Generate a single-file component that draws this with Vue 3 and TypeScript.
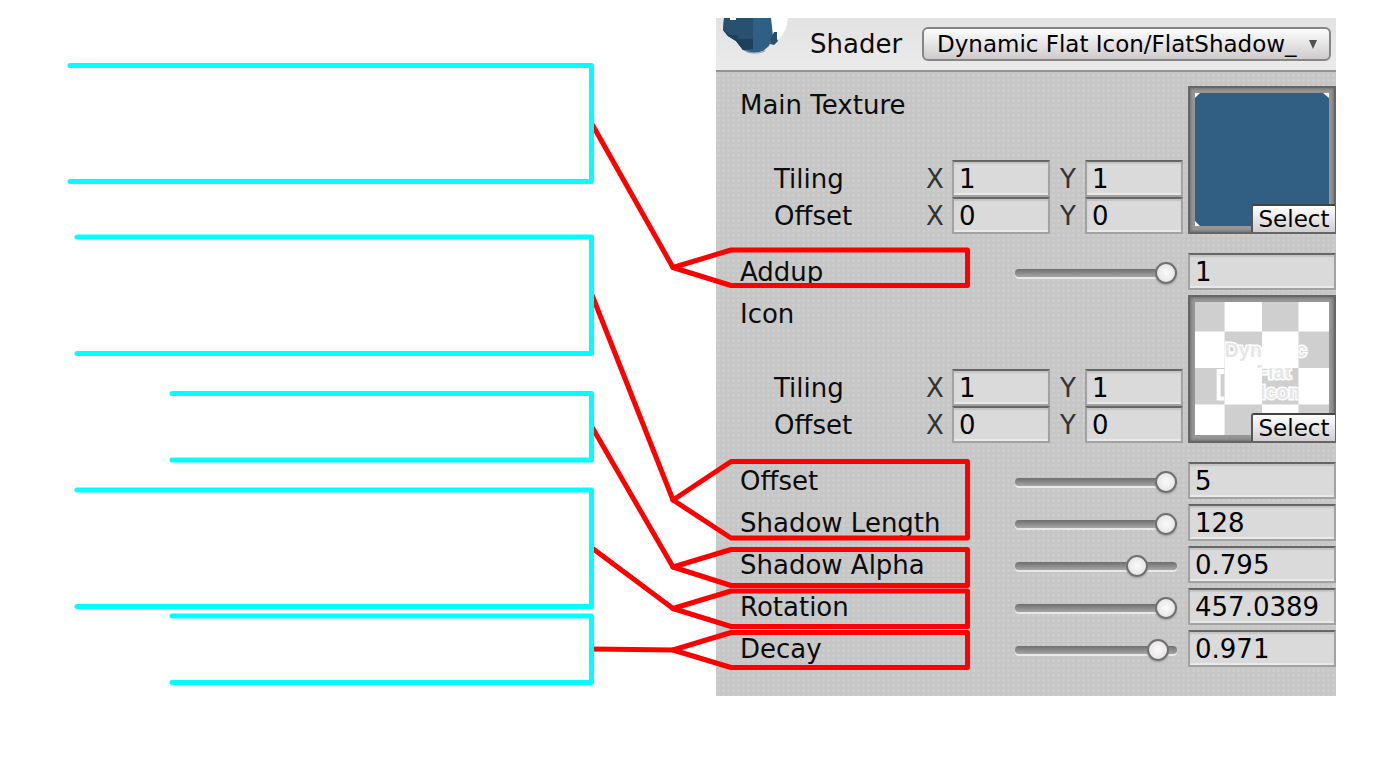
<script setup lang="ts">
import { reactive, ref } from 'vue'

interface Axis { x: string; y: string }
interface TextureProp { kind: 'texture'; id: string; label: string; tiling: Axis; offset: Axis; preview: 'solid' | 'checker' }
interface RangeProp { kind: 'range'; id: string; label: string; min: number; max: number; step: number; value: number }
type Prop = TextureProp | RangeProp

const shader = ref('Dynamic Flat Icon/FlatShadow_')

const range = (id: string, label: string, min: number, max: number, value: number): RangeProp =>
  ({ kind: 'range', id, label, min, max, value, step: 0.0001 })

const texture = (id: string, label: string, preview: 'solid' | 'checker'): TextureProp =>
  ({ kind: 'texture', id, label, preview, tiling: { x: '1', y: '1' }, offset: { x: '0', y: '0' } })

const props = reactive<Prop[]>([
  texture('main', 'Main Texture', 'solid'),
  range('addup', 'Addup', 0, 1, 1),
  texture('icon', 'Icon', 'checker'),
  range('offset', 'Offset', 0, 5, 5),
  range('length', 'Shadow Length', 0, 128, 128),
  range('alpha', 'Shadow Alpha', 0, 1, 0.795),
  range('rotation', 'Rotation', 0, 457.0389, 457.0389),
  range('decay', 'Decay', 0.5, 1, 0.971),
])

const cells = 'M0 0H30V30H0ZM68 0H105V30H68ZM30 30H68V67H30ZM105 30H136V67H105ZM0 67H30V104H0ZM68 67H105V104H68ZM30 104H68V135H30ZM105 104H136V135H105Z'

const brackets = [
  'M70 65.500H591.500V181.500H70',
  'M77 237H591.500V353.500H77',
  'M172 393.500H591.500V460H172',
  'M77 490H591.500V606.500H77',
  'M172 616H591.500V682.500H172',
]

const leaders = [
  'M592 124L673 267.500',
  'M592 295L673 500',
  'M592 427L673 567',
  'M592 548L673 608.500',
  'M592 649L673 650',
]

const tags = [
  'M673 267.500L731 250H967.500V285.500H731Z',
  'M673 500L731 461.500H967.500V538H731Z',
  'M673 567L731 549.500H967.500V585.500H731Z',
  'M673 608.500L731 591H967.500V626.500H731Z',
  'M673 650L731 632.500H967.500V667.500H731Z',
]
</script>

<template>
  <main class="page">
    <section class="inspector">
      <header class="head">
        <svg class="ball" width="72" height="52" viewBox="0 0 72 52" aria-hidden="true">
          <path d="M50 0H72Q71 13 63 21L50 26Z" fill="#fff" />
          <path d="M8 0H55L57 18L53 28L47 33Q36 37 27 32L20 23L12 18L7 12Z" fill="#2f6084" />
          <path d="M8 0H37V31L27 32L20 23L12 18L7 12Z" fill="#28506f" />
          <path d="M7 12L14 17H22V21H37V31L27 32L20 23L12 18Z" fill="#1f405b" />
          <path d="M29 32Q40 37 50 32L48 34Q38 37 30 34Z" fill="#7e9db5" />
          <path d="M55 20L58 14H61V21L62 23L58 27L54 26Z" fill="#2a4f6c" />
          <path d="M14 0H20V2H14Z" fill="#fff" />
        </svg>
        <label class="shader-label" for="shader">Shader</label>
        <span class="dropdown">
          <select id="shader" v-model="shader">
            <option>Dynamic Flat Icon/FlatShadow_</option>
          </select>
          <svg class="arrow" width="8" height="9" viewBox="0 0 8 9" aria-hidden="true">
            <path d="M0 0H8L4 9Z" fill="#505050" />
          </svg>
        </span>
      </header>

      <div class="props">
        <template v-for="p in props" :key="p.id">
          <div v-if="p.kind === 'texture'" class="texture">
            <div class="fields">
              <span class="title">{{ p.label }}</span>
              <div class="vector">
                <span class="name">Tiling</span>
                <label class="axis" :for="p.id + '-tx'">X</label>
                <input :id="p.id + '-tx'" v-model="p.tiling.x" class="field" type="text" />
                <label class="axis y" :for="p.id + '-ty'">Y</label>
                <input :id="p.id + '-ty'" v-model="p.tiling.y" class="field" type="text" />
              </div>
              <div class="vector">
                <span class="name">Offset</span>
                <label class="axis" :for="p.id + '-ox'">X</label>
                <input :id="p.id + '-ox'" v-model="p.offset.x" class="field" type="text" />
                <label class="axis y" :for="p.id + '-oy'">Y</label>
                <input :id="p.id + '-oy'" v-model="p.offset.y" class="field" type="text" />
              </div>
            </div>
            <div class="preview">
              <svg v-if="p.preview === 'solid'" viewBox="0 0 136 135" aria-hidden="true">
                <rect width="136" height="135" fill="#fff" />
                <path d="M5 0H130L136 5V135H5L0 130V5Z" fill="#315f84" />
              </svg>
              <svg v-else viewBox="0 0 136 135" aria-hidden="true">
                <clipPath id="cells"><path :d="cells" /></clipPath>
                <rect width="136" height="135" fill="#fff" />
                <path :d="cells" fill="#cfcfcf" />
                <g clip-path="url(#cells)">
                  <path d="M22 68H30V100H22ZM30 50H68V67H30Z" fill="#fff" />
                  <path d="M26 73H30V96H26Z" fill="#cfcfcf" />
                  <g class="logo">
                    <text x="30" y="56">Dynamic</text>
                    <text x="62" y="78">Flat</text>
                    <text x="66" y="98">Icon</text>
                  </g>
                </g>
              </svg>
              <button class="select" type="button">Select</button>
            </div>
          </div>

          <div v-else class="range">
            <label class="title" :for="p.id">{{ p.label }}</label>
            <input :id="p.id" v-model.number="p.value" class="slider" type="range" :min="p.min" :max="p.max" :step="p.step" />
            <input v-model="p.value" class="field" type="text" :aria-label="p.label + ' value'" />
          </div>
        </template>
      </div>
    </section>

    <svg class="callouts" width="1000" height="769" viewBox="0 0 1000 769" aria-hidden="true">
      <g class="red">
        <path v-for="d in leaders" :key="d" :d="d" />
        <path v-for="d in tags" :key="d" :d="d" />
      </g>
      <g class="cyan">
        <path v-for="d in brackets" :key="d" :d="d" />
      </g>
    </svg>
  </main>
</template>

<style>
body {
  background: #fff;
}
</style>

<style scoped>
.page {
  position: relative;
  box-sizing: border-box;
  min-height: 100vh;
  padding: 18px 58px 73px 716px;
  font: 26px/37px "DejaVu Sans", Verdana, sans-serif;
  color: #0c0c0c;
}

.page * {
  box-sizing: border-box;
}

.callouts {
  position: absolute;
  top: 0;
  left: 0;
  pointer-events: none;
}

.callouts path {
  fill: none;
  stroke-width: 5;
  stroke-linecap: round;
  stroke-linejoin: round;
}

.red path {
  stroke: #f00;
}

.cyan path {
  stroke: #0ff;
}

.inspector {
  background-color: #c6c6c6;
  background-image: radial-gradient(circle, #cdcdcd 1px, transparent 2px);
  background-size: 5px 5px;
}

.head {
  display: flex;
  align-items: center;
  height: 54px;
  padding-right: 5px;
  border-bottom: 2px solid #929292;
  background: linear-gradient(#e2e2e2, #ebebeb);
}

.ball {
  flex: none;
}

.shader-label {
  flex: none;
  width: 134px;
  padding: 1px 0 0 22px;
}

.dropdown {
  position: relative;
  flex: 1;
  min-width: 0;
}

.dropdown select {
  display: block;
  width: 100%;
  height: 34px;
  padding: 0 20px 0 13px;
  appearance: none;
  border: 2px solid #858585;
  border-radius: 6px;
  background: linear-gradient(#fdfdfd, #cfcbcd);
  color: #000;
  font: 23px/30px "DejaVu Sans", Verdana, sans-serif;
}

.arrow {
  position: absolute;
  top: 13px;
  right: 14px;
}

.props {
  display: flex;
  flex-direction: column;
  gap: 5px;
  padding: 14px 0 29px 24px;
}

.texture,
.range {
  display: flex;
  align-items: center;
}

.texture {
  margin-bottom: 14px;
}

.range {
  height: 37px;
}

.fields {
  display: flex;
  flex: 1;
  flex-direction: column;
  height: 148px;
  min-width: 0;
}

.fields > .title {
  margin-bottom: auto;
}

.title,
.name,
.axis {
  padding-top: 1px;
}

.vector {
  display: flex;
  height: 37px;
  padding: 0 5px 0 34px;
}

.name {
  flex: 1;
}

.axis {
  width: 26px;
  color: #333;
}

.axis.y {
  width: 35px;
  padding-left: 10px;
}

.field {
  width: 98px;
  height: 37px;
  padding: 2px 5px 0;
  border: 2px solid #a2a2a2;
  border-top: 2px solid #666;
  border-radius: 0;
  outline: 0;
  background-color: #dadada;
  box-shadow: inset 0 2px 1px #c4c4c4, inset 0 -2px #e9e9e9;
  color: #000;
  font: inherit;
}

.preview {
  position: relative;
  flex: none;
  width: 148px;
  height: 148px;
  padding: 5px;
  border: 2px solid #666;
  background: #969696;
  box-shadow: inset 0 0 3px 1px #707070;
}

.preview svg {
  display: block;
  width: 100%;
}

.logo {
  fill: #e6e6e6;
  stroke: #fff;
  stroke-width: 3px;
  paint-order: stroke;
  font: bold 20px "Liberation Sans", Arial, sans-serif;
}

.select {
  position: absolute;
  right: -1px;
  bottom: 0;
  width: 84px;
  height: 28px;
  padding: 0;
  border: 0;
  border-top: 2px solid #444;
  border-left: 2px solid #555;
  border-top-left-radius: 3px;
  background: linear-gradient(#fff, #d0cecf);
  color: #000;
  font: 23px/26px "DejaVu Sans", Verdana, sans-serif;
}

.range .title {
  flex: 1;
  min-width: 0;
}

.range .field {
  width: 148px;
}

.slider {
  width: 162px;
  height: 24px;
  margin: 2px 11px 0 0;
  appearance: none;
  background: none;
}

.slider::-webkit-slider-runnable-track {
  height: 8px;
  border-radius: 4px;
  background: linear-gradient(#6e6e6e, #a6a6a6);
  box-shadow: 0 2px #e8e8e8;
}

.slider::-webkit-slider-thumb {
  width: 22px;
  height: 22px;
  margin-top: -7px;
  appearance: none;
  border: 2px solid #707070;
  border-radius: 50%;
  background: radial-gradient(#fbfbfb, #e0dcdd);
  box-shadow: 0 1px 2px #999;
}
</style>
